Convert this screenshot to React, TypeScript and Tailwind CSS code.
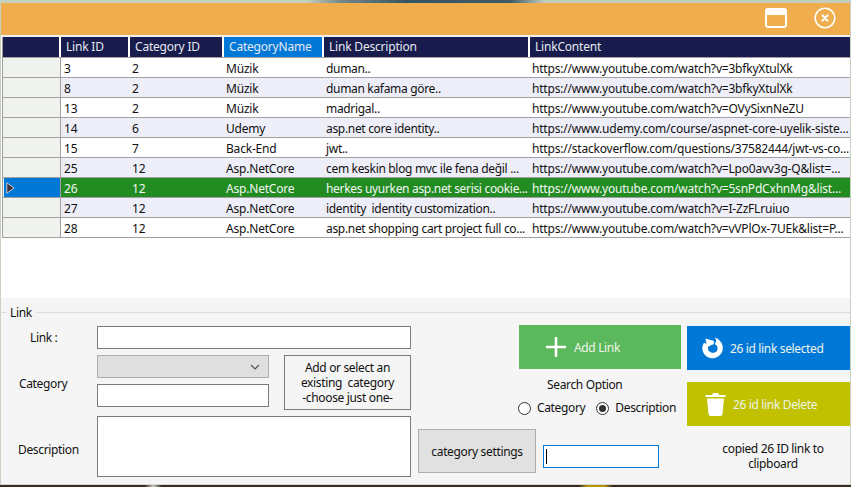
const font = "font-['Noto_Sans','Open_Sans',sans-serif] tracking-[-0.2px]";

type Row = [string, string, string, string, string];
const rows: Row[] = [
  ["3", "2", "Müzik", "duman..", "https://www.youtube.com/watch?v=3bfkyXtulXk"],
  ["8", "2", "Müzik", "duman kafama göre..", "https://www.youtube.com/watch?v=3bfkyXtulXk"],
  ["13", "2", "Müzik", "madrigal..", "https://www.youtube.com/watch?v=OVySixnNeZU"],
  ["14", "6", "Udemy", "asp.net core identity..", "https://www.udemy.com/course/aspnet-core-uyelik-siste..."],
  ["15", "7", "Back-End", "jwt..", "https://stackoverflow.com/questions/37582444/jwt-vs-co..."],
  ["25", "12", "Asp.NetCore", "cem keskin blog mvc ile fena değil ...", "https://www.youtube.com/watch?v=Lpo0avv3g-Q&list=..."],
  ["26", "12", "Asp.NetCore", "herkes uyurken asp.net serisi cookie...", "https://www.youtube.com/watch?v=5snPdCxhnMg&list..."],
  ["27", "12", "Asp.NetCore", "identity  identity customization..", "https://www.youtube.com/watch?v=I-ZzFLruiuo"],
  ["28", "12", "Asp.NetCore", "asp.net shopping cart project full co...", "https://www.youtube.com/watch?v=vVPlOx-7UEk&list=P..."],
];

const cols = "grid grid-cols-[58px_69px_94px_100px_206px_1fr]";

function Header() {
  const names = ["Link ID", "Category ID", "CategoryName", "Link Description", "LinkContent"];
  return (
    <div className={`${cols} h-[20px] bg-[#171c4c] text-[12px] leading-[20px] text-[#e6e8f2]`}>
      <div className="border-r-2 border-white" />
      {names.map((n, i) => (
        <div
          key={n}
          className={`whitespace-pre pl-[5px] ${i === 4 ? "" : "border-r-2 border-white"} ${i === 2 ? "bg-[#0078d7]" : ""}`}
        >
          {n}
        </div>
      ))}
    </div>
  );
}

function DataRow({ row, index }: { row: Row; index: number }) {
  const selected = index === 6;
  const bg = selected ? "bg-[#228b22] text-[#f2f7f2]" : index % 2 === 0 ? "bg-white text-[#111]" : "bg-[#eeeef8] text-[#111]";
  return (
    <div className={`${cols} h-5 grid-rows-[20px] text-[12px] leading-[19px]`}>
      <div className="border-r border-b border-r-[#a0a0a0] border-b-[#a0a0a0] bg-[#f0f2ee]">
        <div className={`flex h-[19px] items-center pl-[2px] ${selected ? "ml-[1px] bg-[#0078d7]" : ""}`}>
          {selected && (
            <svg width="9" height="12" viewBox="0 0 9 12" className="shrink-0">
              <path d="M0.8 0.8 L8 6 L0.8 11.2 Z" fill="#3d3036" stroke="#e8e8f0" strokeWidth="0.8" />
            </svg>
          )}
        </div>
      </div>
      {row.map((c, i) => (
        <div
          key={i}
          className={`h-5 overflow-hidden whitespace-pre border-b border-[#a0a0a0] pt-[1px] ${i === 0 ? "pl-[3px]" : "pl-[2px]"} ${i === 3 ? "tracking-[-0.32px]" : ""} ${bg}`}
        >
          {c}
        </div>
      ))}
    </div>
  );
}

function Box({ className = "" }: { className?: string }) {
  return <div className={`border border-[#7a7a7a] bg-white ${className}`} />;
}

function ActionButton({ className, icon, label, labelClass = "" }: { className: string; icon: React.ReactNode; label: string; labelClass?: string }) {
  return (
    <div className={`flex items-center text-[12px] text-[#eef4e8] ${className}`}>
      {icon}
      <span className={`pt-[2px] ${labelClass}`}>{label}</span>
    </div>
  );
}

function Radio({ checked, label }: { checked?: boolean; label: string }) {
  return (
    <div className="flex items-center gap-[6px]">
      <span className="flex h-[13px] w-[13px] items-center justify-center rounded-full border border-[#333] bg-white">
        {checked && <span className="h-[7px] w-[7px] rounded-full bg-[#333]" />}
      </span>
      <span>{label}</span>
    </div>
  );
}

export default function App() {
  return (
    <div className={`${font} flex h-[487px] w-[851px] flex-col overflow-hidden bg-[#c8d0c0] text-[#111]`}>
      <div className="h-[3px] shrink-0 bg-[linear-gradient(90deg,#c6d0bf_36%,#76888a_40%,#33555f_48%,#3d5c66_60%,#c4ccbc_64%)]" />
      <div className="ml-[1px] flex h-[482px] w-[849px] shrink-0 flex-col bg-white">
        <div className="flex h-[32px] shrink-0 items-start justify-end gap-[27px] bg-[#f0ad4e] pr-[14px] pt-[5px]">
          <svg width="22" height="20" viewBox="0 0 22 20">
            <rect x="1" y="1" width="20" height="18" rx="2" fill="none" stroke="#fff" strokeWidth="2" />
            <rect x="1" y="1" width="20" height="6" rx="1" fill="#fff" />
          </svg>
          <svg width="22" height="22" viewBox="0 0 22 22" className="mt-[-1px]">
            <circle cx="11" cy="11" r="9.8" fill="none" stroke="#fff" strokeWidth="1.6" />
            <path d="M8.5 8.5 L13.5 13.5 M13.5 8.5 L8.5 13.5" stroke="#fff" strokeWidth="2.2" strokeLinecap="round" />
          </svg>
        </div>
        <div className="h-[2px] shrink-0 bg-[#f0f0f0]" />
        <div className="ml-[1px] shrink-0 border-l border-[#a0a0a0]">
          <Header />
          <div className="h-[1px] bg-[#a0a0a0]" />
          {rows.map((r, i) => (
            <DataRow key={i} row={r} index={i} />
          ))}
        </div>
        <div className="h-[60px] shrink-0 bg-white" />
        <div className="relative flex min-h-0 flex-1 flex-col border-b border-[#d4d4d4] bg-[#f5f5f5] text-[12px] leading-[16px] tracking-[-0.35px]">
          <div className="absolute left-0 right-0 top-[14px] h-[1px] bg-[#dcdcdc]" />
          <div className="relative mt-[7px] ml-[5px] w-fit bg-[#f5f5f5] px-[4px] text-[#111]">Link</div>
          <div className="mt-[5px] flex pl-[17px]">
            <div className="flex w-[79px] shrink-0 flex-col text-[#111]">
              <div className="ml-[12px] mt-[2px] h-[22px] leading-[20px]">Link :</div>
              <div className="ml-[1px] mt-[24px] h-[20px] leading-[20px]">Category</div>
              <div className="mt-[46px] leading-[20px]">Description</div>
            </div>
            <div className="flex w-[314px] shrink-0 flex-col">
              <Box className="h-[23px] w-full" />
              <div className="mt-[6px] flex justify-between">
                <div className="flex flex-col gap-[6px]">
                  <div className="flex h-[23px] w-[172px] items-center justify-end border border-[#adadad] bg-[#dfdfdf] pr-[8px]">
                    <svg width="10" height="6" viewBox="0 0 10 6"><path d="M1 1 L5 5 L9 1" fill="none" stroke="#555" strokeWidth="1.2" /></svg>
                  </div>
                  <Box className="h-[23px] w-[172px]" />
                </div>
                <div className="flex h-[55px] w-[127px] flex-col items-center justify-center whitespace-pre border border-[#7a7a7a] text-center leading-[15px]">
                  <span>Add or select an</span>
                  <span>existing  category</span>
                  <span>-choose just one-</span>
                </div>
              </div>
              <Box className="mt-[6px] h-[61px] w-full" />
            </div>
            <div className="ml-[7px] flex w-[118px] shrink-0 flex-col justify-end">
              <div className="mb-[4px] flex h-[44px] items-center justify-center border border-[#adadad] bg-[#e1e1e1] pt-[2px]">category settings</div>
            </div>
          </div>
          <div className="absolute left-[518px] top-[27px] flex w-[331px] items-start gap-[6px]">
            <div className="flex w-[162px] flex-col">
              <ActionButton
                className="h-[44px] bg-[#5cb85c] pl-[27px]"
                label="Add Link"
                labelClass="ml-[8px]"
                icon={<svg width="20" height="20" viewBox="0 0 20 20"><path d="M10 1 V19 M1 10 H19" stroke="#fff" strokeWidth="2.6" strokeLinecap="round" /></svg>}
              />
              <div className="mt-[8px] ml-[28px]">Search Option</div>
              <div className="ml-[-1px] mt-[7px] flex gap-[11px] whitespace-nowrap">
                <Radio label="Category" />
                <Radio checked label="Description" />
              </div>
            </div>
            <div className="mt-[1px] flex w-[163px] flex-col gap-[12px]">
              <ActionButton
                className="h-[44px] bg-[#0078d7] pl-[15px]"
                label="26 id link selected"
                labelClass="ml-[7px]"
                icon={
                  <svg width="21" height="22" viewBox="0 0 21 22" className="shrink-0">
                    <path d="M14 4.6 A7.4 7.4 0 1 1 4.4 7" fill="none" stroke="#fff" strokeWidth="5.6" />
                    <path d="M3.5 1.5 L12 4 L11.5 8 L6 9.5 L4.5 7 Z" fill="#fff" />
                    <path d="M13 0.5 Q19.5 3 20.5 10 L15 9 Q15.5 5 13 0.5 Z" fill="#fff" />
                    <circle cx="11.5" cy="11.5" r="4" fill="#0078d7" />
                  </svg>
                }
              />
              <ActionButton
                className="h-[44px] bg-[#c1c100] pl-[18px]"
                label="26 id link Delete"
                labelClass="ml-[7px]"
                icon={
                  <svg width="21" height="24" viewBox="0 0 21 24" className="shrink-0">
                    <path d="M0.5 3 H7 L8 1 H13 L14 3 H20.5 V5 H0.5 Z" fill="#fff" />
                    <path d="M2 6.5 H19 L17.5 22 Q17.3 24 15.5 24 H5.5 Q3.7 24 3.5 22 Z" fill="#fff" />
                  </svg>
                }
              />
            </div>
          </div>
          <div className="absolute left-[542px] top-[147px] flex h-[23px] w-[116px] items-center border border-[#0078d7] bg-white pl-[2px]">
            <span className="h-[15px] w-[1px] bg-black" />
          </div>
          <div className="absolute left-[699px] top-[143px] w-[146px] text-center leading-[15px]">
            copied 26 ID link to<br />clipboard
          </div>
        </div>
      </div>
      <div className="h-[2px] shrink-0 bg-[linear-gradient(90deg,#3a2a22_17%,#c8c8c0_18%,#3a2a22_19%,#3a2a22_68%,#b8960c_69%,#b8960c_71%,#3a2a22_72%)]" />
    </div>
  );
}
